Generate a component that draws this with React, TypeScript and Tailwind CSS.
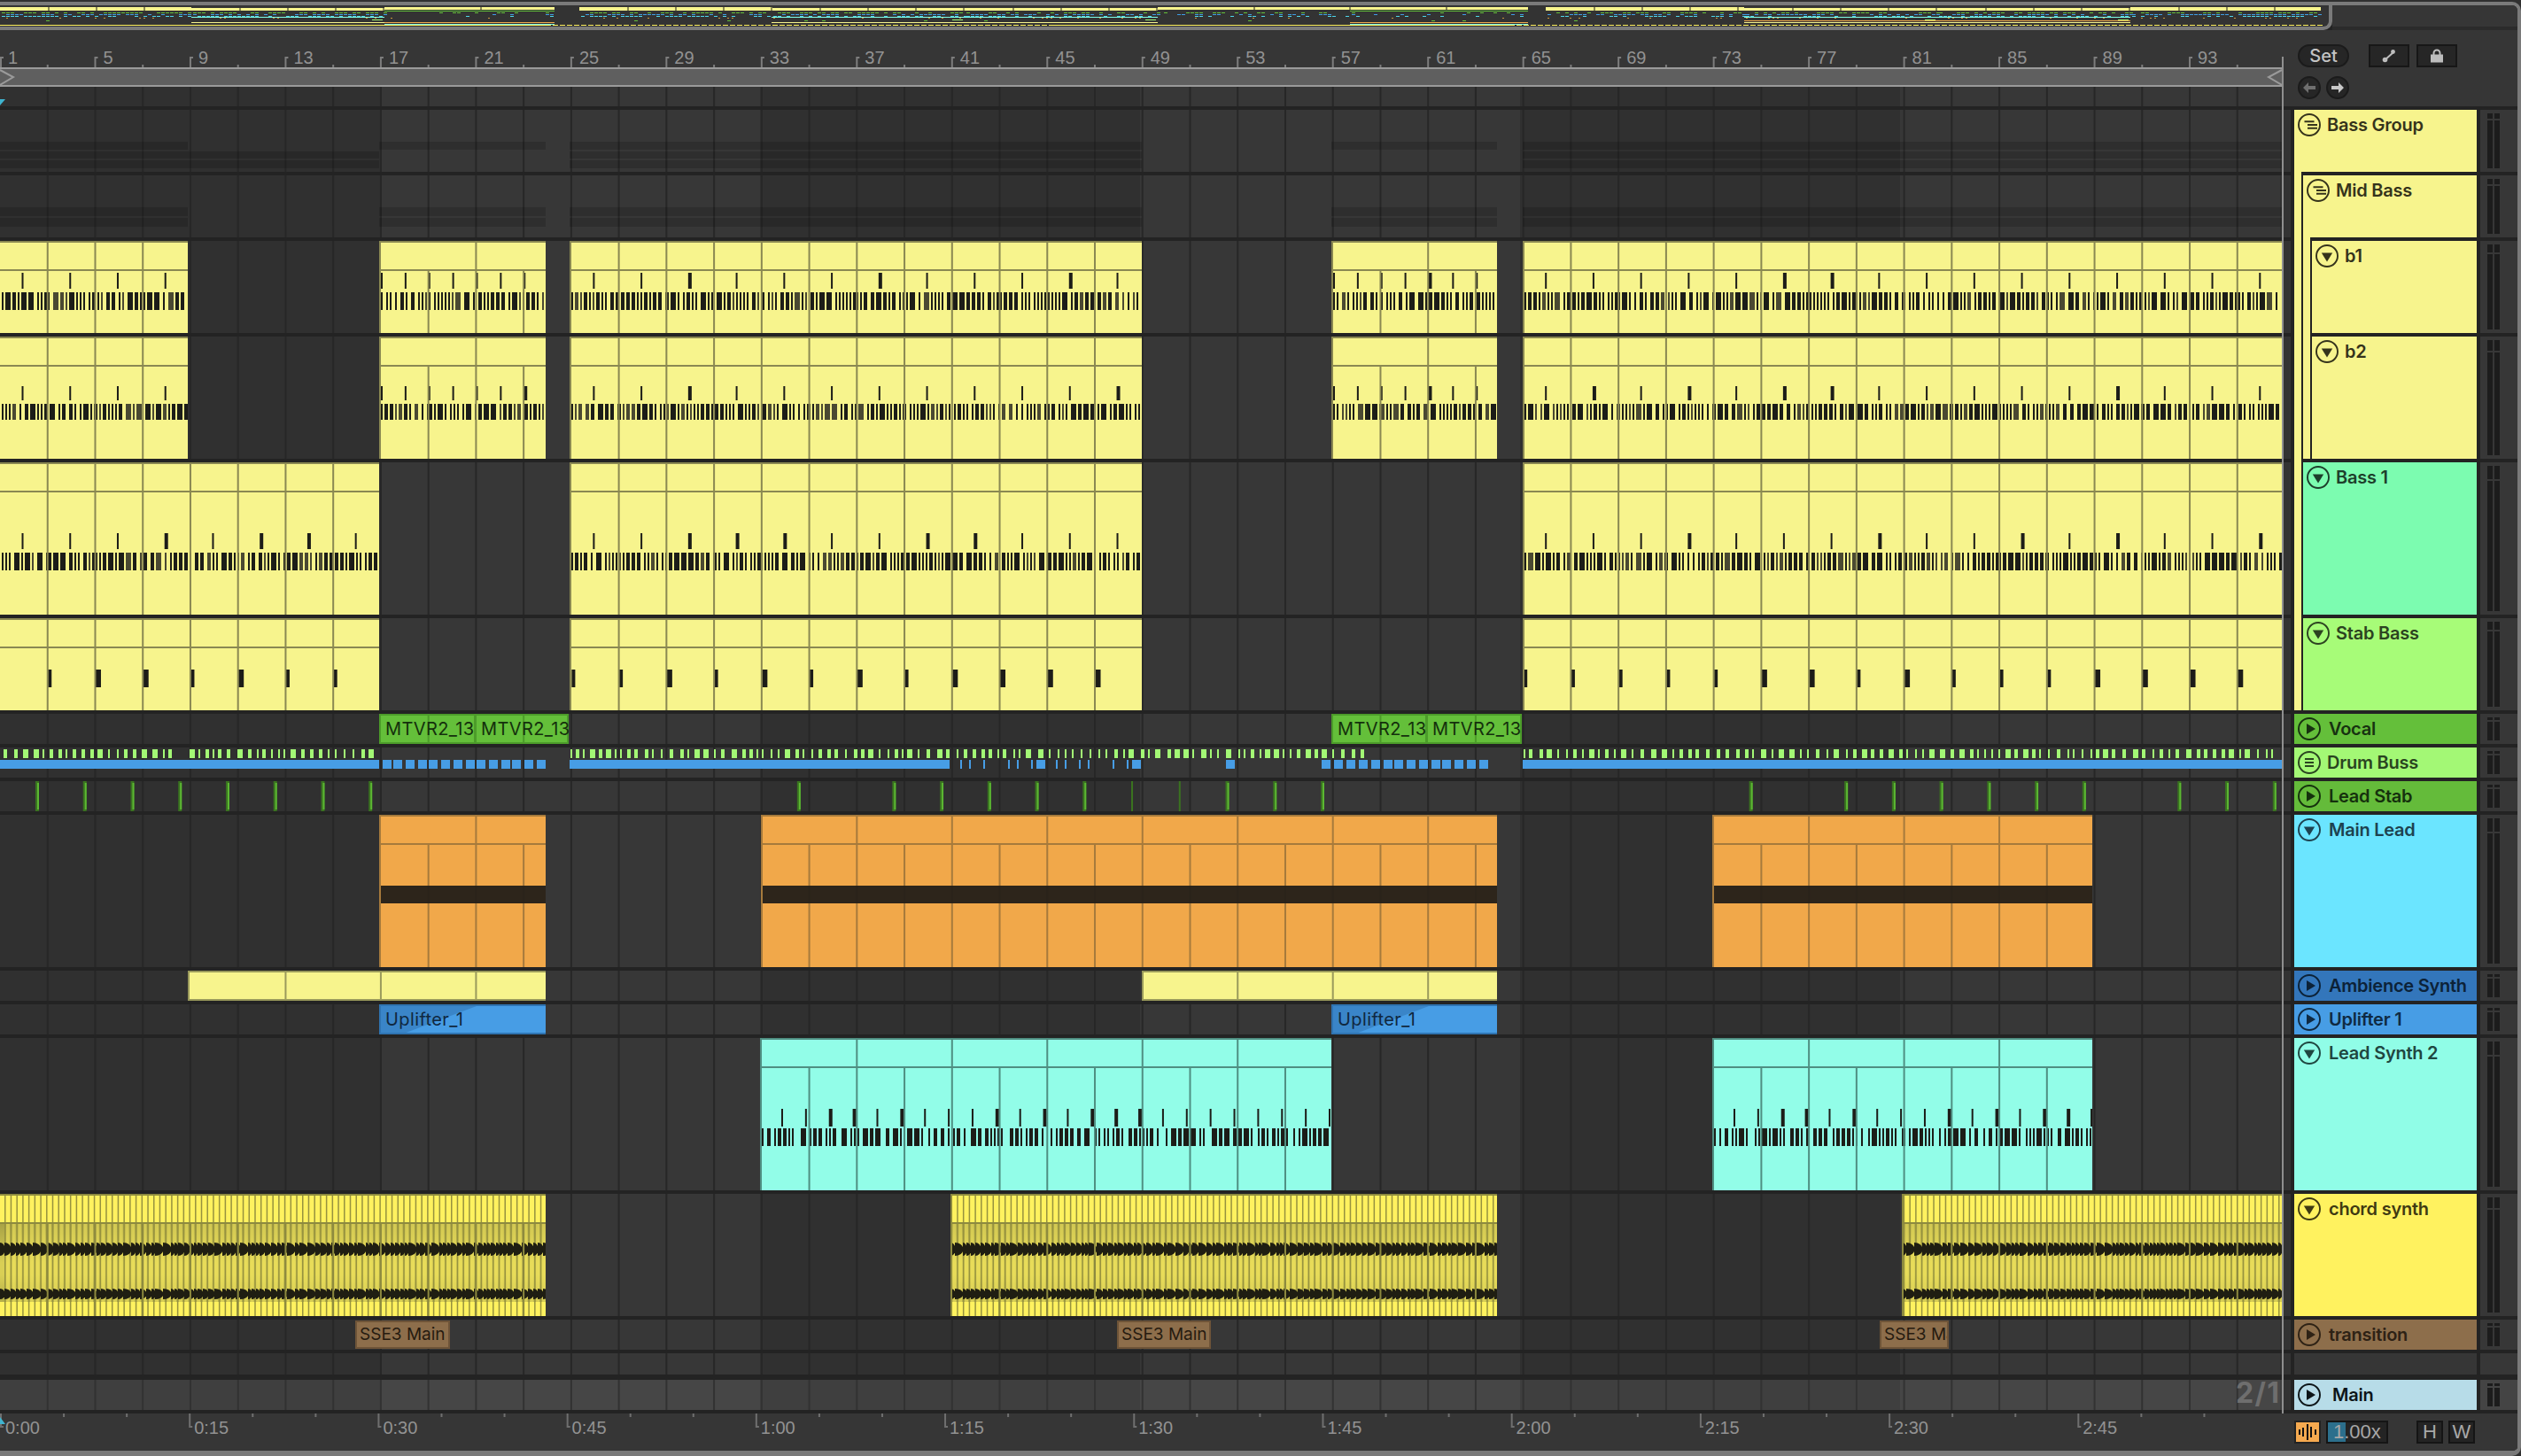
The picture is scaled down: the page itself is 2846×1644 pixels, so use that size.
import type { ReactNode } from "react";

const BAR = 26.87;
const STEP = 53.74;
const barX = (n: number) => (n - 1) * BAR - 1;
const gridX = (k: number) => k * STEP - 1;

const LABEL_FONT = "font-['Inter',sans-serif]";
const RULER_FONT = "font-['Liberation_Sans',sans-serif]";

function makeRng(seed: number) {
  let s = seed;
  return () => {
    s = (s * 1664525 + 1013904223) % 4294967296;
    return s / 4294967296;
  };
}

const box = (x: number, y: number, w: number, h: number) => `M${x} ${y}h${w}v${h}h${-w}z`;

function pick(r: () => number, list: number[]) {
  return list[Math.floor(r() * list.length)];
}

type Span = [number, number];

const B_SPANS: Span[] = [[0, 212], [428, 616], [643, 1289], [1503, 1690], [1719, 2576]];
const BASS_SPANS: Span[] = [[0, 428], [643, 1289], [1719, 2576]];

function LaneBg({ h, main = false }: { h: number; main?: boolean }) {
  const sections = [1, 3, 5];
  let grid = "";
  for (let k = 1; k < 48; k++) grid += box(gridX(k), 0, 2, h);
  return (
    <svg className="absolute inset-0" width={2576} height={h}>
      {sections.map((i) => (
        <rect key={i} x={i * 429} y={0} width={429} height={h} fill={main ? "#464646" : "#373737"} />
      ))}
      <path d={grid} fill={main ? "#323232" : "#272727"} />
    </svg>
  );
}

function Stripes({ spans, y, h }: { spans: Span[]; y: number; h: number }) {
  return (
    <>
      {spans.map(([a, b]) => (
        <div key={a} className="absolute bg-[#000000]/15" style={{ left: a, width: b - a, top: y, height: h }} />
      ))}
    </>
  );
}

function Clip({
  span,
  h,
  bg,
  line,
  band = 34,
  major = 1,
  label,
  labelCls,
  children,
  overlay,
}: {
  span: Span;
  h: number;
  bg: string;
  line: string;
  band?: number;
  major?: number;
  label?: string;
  labelCls?: string;
  children?: ReactNode;
  overlay?: ReactNode;
}) {
  const [x0, x1] = span;
  const w = x1 - x0;
  let lines = "";
  for (let k = 1; k < 48; k++) {
    const x = gridX(k) - x0;
    if (x < 2 || x >= w - 1) continue;
    if (k % major === 0) lines += box(x, 0, 2, h);
    else lines += box(x, band, 2, h - band);
  }
  return (
    <div className={`absolute top-0 overflow-hidden ${bg}`} style={{ left: x0, width: w, height: h }}>
      <svg className="absolute inset-0" width={w} height={h}>
        {children}
        <path d={lines} fill={line} />
        {overlay}
        <rect x={0} y={0} width={w} height={2} fill={line} />
        <rect x={0} y={0} width={x0 > 0 ? 2 : 0} height={h} fill={line} />
        {band < h ? <rect x={0} y={band - 2} width={w} height={2} fill={line} /> : null}
        {band >= h ? <rect x={0} y={h - 2} width={w} height={2} fill={line} /> : null}
      </svg>
      {label ? (
        <span
          className={`absolute top-[5px] left-[7px] text-[20px] leading-[24px] tracking-[0.02em] whitespace-nowrap ${LABEL_FONT} ${labelCls}`}
        >
          {label}
        </span>
      ) : null}
    </div>
  );
}

function Barcode({
  x0,
  x1,
  y,
  h,
  seed,
  groups = false,
  skip = 2,
}: {
  x0: number;
  x1: number;
  y: number;
  h: number;
  seed: number;
  groups?: boolean;
  skip?: number;
}) {
  const r = makeRng(seed);
  let dark = "";
  let olive = "";
  let x = skip;
  let n = 0;
  const w = x1 - x0;
  while (x < w - 2) {
    const bw = pick(r, [2, 2, 2, 4, 4, 6]);
    if (!groups && r() < 0.18) olive += box(x, y, bw, h);
    else dark += box(x, y, Math.min(bw, w - x), h);
    x += bw + pick(r, [2, 2, 2, 4]);
    n++;
    if (groups && n % 7 === 0) x += 4;
  }
  return (
    <>
      <path d={olive} fill="#4a4932" />
      <path d={dark} fill="#1c1d18" />
    </>
  );
}

function Ticks({ xs, x0, y, h, seed, wide = false }: { xs: number[]; x0: number; y: number; h: number; seed: number; wide?: boolean }) {
  const r = makeRng(seed);
  let d = "";
  xs.forEach((x) => {
    const w = wide ? pick(r, [4, 6, 6]) : pick(r, [2, 2, 4]);
    d += box(x - x0, y, w, h);
  });
  return <path d={d} fill="#1c1c18" />;
}

function stepList(a: number, b: number, start: number, step: number) {
  const out: number[] = [];
  for (let x = start; x < b - 1; x += step) if (x >= a) out.push(x);
  return out;
}

function YellowClips({ spans, h, tickY, barY, barH, seed, majors }: { spans: Span[]; h: number; tickY: number; barY: number; barH: number; seed: number; majors?: number[] }) {
  return (
    <>
      {spans.map(([a, b], i) => (
        <Clip key={a} span={[a, b]} h={h} bg="bg-[#f7f48d]" line="#8a8852" major={majors ? majors[i] : 1}>
          <Ticks
            xs={stepList(a, b, a === 428 || a === 1503 ? a + 2 : 24.5, a === 428 || a === 1503 ? BAR : STEP)}
            x0={a}
            y={tickY}
            h={barH - 2}
            seed={seed + i}
          />
          <Barcode x0={a} x1={b} y={barY} h={barH} seed={seed * 3 + i * 11} />
        </Clip>
      ))}
    </>
  );
}

function DrumLane() {
  const r = makeRng(17);
  let green = "";
  const spans: Span[] = [[4, 198], [214, 420], [644, 1540], [1720, 2566]];
  spans.forEach(([a, b]) => {
    let x = a;
    while (x < b) {
      const w = pick(r, [2, 4, 4, 6, 2]);
      green += box(x, 2, w, 10);
      x += w + pick(r, [4, 6, 6, 8]);
    }
  });
  let blue = box(0, 14, 428, 10) + box(643, 14, 429, 10) + box(1719, 14, 857, 10);
  [432, 444, 458, 472, 484, 498, 512, 526, 538, 552, 566, 578, 592, 606].forEach((x) => (blue += box(x, 14, 10, 10)));
  [1084, 1094, 1110, 1138, 1148, 1164, 1192, 1202, 1218, 1228, 1256, 1272].forEach((x) => (blue += box(x, 14, 2, 10)));
  [1170, 1278, 1384, 1492, 1506, 1520, 1534, 1548, 1562, 1574, 1588, 1602, 1616, 1628, 1642, 1656, 1670].forEach(
    (x) => (blue += box(x, 14, 10, 10)),
  );
  return (
    <svg className="absolute inset-0" width={2576} height={34}>
      <path d={green} fill="#a3f875" />
      <path d={blue} fill="#479de5" />
    </svg>
  );
}

function StabLane() {
  const strong = [0, 1, 2, 3, 4, 5, 6, 7, 16, 18, 19, 20, 21, 22, 25, 26, 27, 36, 38, 39, 40, 41, 42, 43, 45, 46, 47];
  const thin = [23, 24];
  return (
    <svg className="absolute inset-0" width={2576} height={34}>
      {strong.map((k) => (
        <g key={k}>
          <rect x={40 + k * 53.74} y={0} width={4} height={34} fill="#3a7320" />
          <rect x={42 + k * 53.74} y={2} width={2} height={30} fill="#5cb833" />
        </g>
      ))}
      {thin.map((k) => (
        <rect key={k} x={41 + k * 53.74} y={0} width={2} height={34} fill="#3a7320" />
      ))}
    </svg>
  );
}

function ChordClip({ span, seed }: { span: Span; seed: number }) {
  const [a, b] = span;
  const w = b - a;
  const r = makeRng(seed);
  let lines = "";
  let blobs = "";
  let glow = "";
  for (let x = 6 - ((a + 1) % 6.72); x < w; x += 6.72) {
    lines += box(x, 2, 1.5, 136);
    glow += box(x + 2, 34, 4, 88);
  }
  let x = 0;
  while (x < w - 1) {
    const bw = pick(r, [5, 6, 7, 8, 10]);
    const d = (y0: number, y1: number) =>
      `M${x} ${y0}Q${x + bw * 0.8} ${y0},${x + bw} ${(y0 + y1) / 2}Q${x + bw * 0.8} ${y1},${x} ${y1}z`;
    blobs += d(55, 70) + d(107, 119);
    x += bw - 1;
  }
  return (
    <Clip span={span} h={138} bg="bg-[#fff25f]" line="#8d8a3f" major={999}>
      <defs>
        <linearGradient id={`wave${seed}`} x1="0" y1="0" x2="0" y2="1">
          <stop offset="0" stopColor="#a9a346" />
          <stop offset="0.5" stopColor="#d9cf55" />
          <stop offset="0.65" stopColor="#d9cf55" />
          <stop offset="1" stopColor="#b3ad49" />
        </linearGradient>
      </defs>
      <rect x={0} y={34} width={w} height={88} fill={`url(#wave${seed})`} />
      <path d={glow} fill="#f4e85c" fillOpacity={0.55} />
      <path d={lines} fill="#96923f" />
      <path d={blobs} fill="#1f1e12" />
    </Clip>
  );
}

function TrackIcon({ kind }: { kind: "group" | "bus" | "play" | "down" }) {
  return (
    <svg width={26} height={26} viewBox="0 0 26 26" className="shrink-0">
      <circle cx={13} cy={13} r={12} fill="none" stroke="currentColor" strokeWidth={1.9} />
      {kind === "play" ? <path d="M10 7l0 12 10-6z" fill="currentColor" /> : null}
      {kind === "down" ? <path d="M6.8 9.6h12.4L13 19.6z" fill="currentColor" /> : null}
      {kind === "group" ? <path d="M7.5 9.3h11M11 13h11M11 16.7h11" stroke="currentColor" strokeWidth={1.9} /> : null}
      {kind === "bus" ? <path d="M8 9h10M8 13h10M8 17h10" stroke="currentColor" strokeWidth={2.2} /> : null}
    </svg>
  );
}

function Meter({ h, main = false }: { h: number; main?: boolean }) {
  const piece = Math.max(2, Math.round(h * 0.09));
  const bar = (
    <div className="flex w-[6px] flex-col gap-[2px]">
      <div className="bg-[#1c1c1c]" style={{ height: piece }} />
      <div className="flex-1 bg-[#1c1c1c]" />
    </div>
  );
  return (
    <div className={`ml-1 flex h-full w-[42px] gap-[2px] py-1 pl-2 ${main ? "bg-[#444444]" : "bg-[#373737]"}`}>
      {bar}
      {bar}
    </div>
  );
}

function Track({
  h,
  name,
  kind,
  bg,
  fg,
  indent = 0,
  gap = "ml-[9px]",
  main = false,
  children,
}: {
  h: number;
  name?: string;
  kind?: "group" | "bus" | "play" | "down";
  bg?: string;
  fg?: string;
  indent?: number;
  gap?: string;
  main?: boolean;
  children?: ReactNode;
}) {
  return (
    <div className="flex" style={{ height: h }}>
      <div className={`relative w-[2576px] overflow-hidden ${main ? "bg-[#3f3f3f]" : "bg-[#303030]"}`}>
        <LaneBg h={h} main={main} />
        {children}
      </div>
      <div className="w-[2px]" />
      <div className="h-full w-[8px] bg-[#333333]" />
      <div className="w-[4px]" />
      <div className="flex w-[206px]" style={{ paddingLeft: indent }}>
        {name ? (
          <div className={`flex h-full flex-1 items-start pl-[4px] ${bg} ${fg}`}>
            <div className="flex h-[34px] items-center">
              <TrackIcon kind={kind ?? "play"} />
              <span className={`${gap} text-[20px] leading-[24px] font-semibold tracking-[-0.012em] whitespace-nowrap ${LABEL_FONT}`}>
                {name}
              </span>
            </div>
          </div>
        ) : (
          <div className="h-full flex-1 bg-[#363636]" />
        )}
      </div>
      {name ? <Meter h={h} main={main} /> : <div className="ml-1 h-full w-[42px] bg-[#373737]" />}
    </div>
  );
}

function Overview() {
  const r = makeRng(5);
  const paths: Record<string, string> = {
    "#f7f48d": "",
    "#8a8852": "",
    "#64bf3a": "",
    "#3f9de5": "",
    "#4fd6e8": "",
    "#c9963c": "",
    "#7ffde4": "",
    "#f1a84a": "",
    "#fff25f": "",
    "#a3f875": "",
  };
  const add = (c: string, x: number, y: number, w: number, h: number) => {
    paths[c] += box(x, y - 6, w, h);
  };
  const dots = (a: number, b: number, density: number) => {
    for (let x = a + 2; x < b; x += 5) {
      if (r() < density) add("#64bf3a", x, 14, 4, 1);
      if (r() < density) add("#3f9de5", x, 16, 4, 1);
      if (r() < density) add("#4fd6e8", x, 18, 4, 1);
      if (r() < density * 0.35) add("#c9963c", x, 20, 2, 1);
      if (r() < 0.05) add("#64bf3a", x, 23, 4, 1);
    }
  };
  const top = (a: number, b: number, y: number, h: number, step: number) => {
    add("#f7f48d", a, y, b - a, h);
    for (let x = a + step; x < b; x += step) add("#8a8852", x, y, 2, h);
  };
  const full = (a: number, b: number) => {
    top(a, b, 8, 4, 54);
    dots(a, b, 0.5);
  };
  const busy = (a: number, b: number) => {
    top(a, b, 9, 3, 54);
    dots(a, b, 0.55);
    add("#7ffde4", a, 19, b - a, 1);
    add("#f7f48d", a, 25, b - a, 1);
    add("#a3f875", b - 14, 22, 12, 1);
  };
  const sparse = (a: number, b: number) => {
    top(a, b, 8, 3, 108);
    add("#64bf3a", a, 12, b - a, 1);
    dots(a, b, 0.14);
    add("#f1a84a", a, 25, b - a, 1);
    add("#7ffde4", a, 27, b - a, 1);
  };
  full(0, 216);
  busy(216, 434);
  sparse(434, 626);
  full(654, 871);
  busy(871, 1089);
  busy(1089, 1307);
  dots(1307, 1524, 0.4);
  top(1307, 1524, 8, 3, 108);
  sparse(1524, 1725);
  full(1745, 1969);
  busy(1969, 2187);
  busy(2187, 2405);
  add("#f1a84a", 1969, 23, 436, 1);
  full(2405, 2620);
  for (let x = 0; x < 2620; x += 8) add("#fff25f", x, 28, 6, 1);
  add("#fff25f", 0, 28, 620, 1);
  add("#fff25f", 1185, 28, 520, 1);
  return (
    <div className="flex h-[28px]">
      <div className="h-full w-[2633px] overflow-hidden rounded-br-[10px] border-r-4 border-b-4 border-[#7a7a7a] bg-[#333333]">
        <svg width={2629} height={24}>
          {Object.keys(paths).map((c) => (
            <path key={c} d={paths[c]} fill={c} />
          ))}
        </svg>
      </div>
      <div className="h-full flex-1 border-b-4 border-[#2b2b2b] bg-[#363636]" />
    </div>
  );
}

function BarRuler() {
  const labels: number[] = [];
  for (let n = 1; n <= 93; n += 4) labels.push(n);
  let d = "";
  labels.forEach((n) => {
    const x = Math.max(barX(n), 0);
    d += box(x, 30, 2, 12) + box(x, 30, 4, 2);
    d += box(barX(n + 2), 39, 2, 3);
  });
  return (
    <div className="relative h-[42px]">
      <svg className="absolute inset-0" width={2576} height={42}>
        <path d={d} fill="#7d7d7d" />
      </svg>
      {labels.map((n) => (
        <span
          key={n}
          className={`absolute top-[20px] text-[20px] leading-[22px] text-[#929292] ${RULER_FONT}`}
          style={{ left: barX(n) + 10 }}
        >
          {n}
        </span>
      ))}
    </div>
  );
}

function LoopBar() {
  return (
    <div className="relative h-[22px] border-y-2 border-[#9a9a9a] bg-[#5f5f5f]">
      <svg className="absolute top-[-2px] left-0" width={2576} height={22} fill="none" stroke="#9a9a9a" strokeWidth={2}>
        <path d="M0 3L15 11 0 20" />
        <path d="M2576 3L2561 11 2576 20" />
      </svg>
    </div>
  );
}

function SidePanel() {
  const btn = "flex h-[26px] w-[46px] items-center justify-center border-2 border-[#171717] bg-[#262626]";
  return (
    <div className="flex w-[266px] flex-col gap-[10px] bg-[#363636] pt-4 pl-[18px]">
      <div className="flex h-[26px] items-center">
        <div
          className={`flex h-[26px] w-[58px] items-center justify-center rounded-full border-2 border-[#1b1b1b] bg-[#262626] text-[20px] leading-none font-medium text-[#c4c4c4] ${LABEL_FONT}`}
        >
          Set
        </div>
        <div className={`ml-[22px] ${btn}`}>
          <svg width={16} height={16} viewBox="0 0 16 16">
            <path d="M3 13L13 4" stroke="#bdbdbd" strokeWidth={2} />
            <circle cx={3.5} cy={12.5} r={2.8} fill="#bdbdbd" />
            <circle cx={12.5} cy={3.5} r={2.4} fill="#bdbdbd" />
          </svg>
        </div>
        <div className={`ml-2 ${btn}`}>
          <svg width={16} height={16} viewBox="0 0 16 16">
            <path d="M4.5 7V5a3.5 3.5 0 0 1 7 0v2" fill="none" stroke="#bdbdbd" strokeWidth={2} />
            <rect x={1} y={6.5} width={14} height={9} fill="#bdbdbd" />
          </svg>
        </div>
      </div>
      <div className="flex gap-[6px]">
        <div className="flex h-[26px] w-[26px] items-center justify-center rounded-full border-2 border-[#1b1b1b] bg-[#262626]">
          <svg width={16} height={14} viewBox="0 0 16 14">
            <path d="M7 1L1 7l6 6V9h8V5H7z" fill="#6f6f6f" />
          </svg>
        </div>
        <div className="flex h-[26px] w-[26px] items-center justify-center rounded-full border-2 border-[#1b1b1b] bg-[#262626]">
          <svg width={16} height={14} viewBox="0 0 16 14">
            <path d="M9 1l6 6-6 6V9H1V5h8z" fill="#c8c8c8" />
          </svg>
        </div>
      </div>
    </div>
  );
}

function TimeRuler() {
  const times = ["0:00", "0:15", "0:30", "0:45", "1:00", "1:15", "1:30", "1:45", "2:00", "2:15", "2:30", "2:45"];
  let d = "";
  for (let k = 0; k < 36; k++) {
    const x = k * 71.07;
    if (k % 3 === 0) d += box(x, 0, 2, 16) + box(x, 14, 4, 2);
    else d += box(x, 0, 2, 4);
  }
  const hBtn = `flex h-[26px] w-[30px] items-center justify-center border-2 border-[#151515] bg-[#242424] text-[22px] leading-none text-[#a8a8a8] ${RULER_FONT}`;
  return (
    <div className="flex h-[42px] bg-[#363636]">
      <div className="relative w-[2590px]">
        <svg className="absolute inset-0" width={2578} height={42}>
          <path d={d} fill="#6f6f6f" />
          <path d="M0 4l6 8H0z" fill="#3fb4d0" />
        </svg>
        {times.map((t, k) => (
          <span
            key={t}
            className={`absolute top-[5px] text-[20px] leading-[22px] text-[#929292] ${RULER_FONT}`}
            style={{ left: k * 213.2 + 6 }}
          >
            {t}
          </span>
        ))}
      </div>
      <div className="flex items-start pt-2">
        <div className="flex h-[26px] w-[30px] items-center justify-center border-2 border-[#222222] bg-[#f5a94f]">
          <svg width={22} height={18} viewBox="0 0 22 18" fill="#111111">
            <rect x={1} y={6} width={2} height={6} />
            <rect x={5} y={4} width={2} height={10} />
            <rect x={10} y={0} width={2} height={18} />
            <rect x={14} y={3} width={2} height={12} />
            <rect x={19} y={6} width={2} height={6} />
          </svg>
        </div>
        <div className="relative ml-[6px] flex h-[26px] w-[70px] items-center border-2 border-[#151515] bg-[#242424]">
          <div className="h-full w-[20px] bg-[#2c6f8c]" />
          <span className={`absolute left-[6px] text-[22px] leading-none text-[#a8a8a8] ${RULER_FONT}`}>1.00x</span>
        </div>
        <div className={`ml-8 ${hBtn}`}>H</div>
        <div className={`ml-[6px] ${hBtn}`}>W</div>
      </div>
    </div>
  );
}

export default function App() {
  const teal: Span[] = [[858, 1503], [1933, 2362]];
  const orange: Span[] = [[428, 616], [859, 1690], [1933, 2362]];
  return (
    <div className="h-[1644px] w-[2846px] overflow-hidden bg-[#303030] pt-[2px]">
      <div className="flex h-[1642px] flex-col overflow-hidden rounded-tr-[10px] rounded-br-[10px] border-t-4 border-r-4 border-b-[6px] border-[#7a7a7a] bg-[#232323]">
        <Overview />
        <div className="flex h-[86px]">
          <div className="relative w-[2576px] bg-[#363636]">
            <BarRuler />
            <LoopBar />
            <div className="relative h-[22px] overflow-hidden bg-[#303030]">
              <LaneBg h={22} />
              <svg className="absolute top-[14px] left-0" width={8} height={8}>
                <path d="M0 0h6L0 7z" fill="#3fb4d0" />
              </svg>
            </div>
          </div>
          <SidePanel />
        </div>
        <div className="relative mt-1 flex flex-col gap-1">
          <div className="absolute top-[-60px] bottom-[-4px] left-[2576px] z-10 w-[2px] bg-[#8f8f8f]" />
          <div className="absolute top-[70px] left-[2590px] z-10 h-[608px] w-[8px] bg-[#f7f48d]" />
          <div className="absolute top-[144px] left-[2600px] z-10 h-[250px] w-[8px] bg-[#f7f48d]" />

          <Track h={70} name="Bass Group" kind="group" bg="bg-[#f7f48d]" fg="text-[#35331b]" gap="ml-[7px]">
            <Stripes spans={B_SPANS} y={36} h={9} />
            <Stripes spans={BASS_SPANS} y={47} h={8} />
            <Stripes spans={BASS_SPANS} y={57} h={9} />
          </Track>
          <Track h={70} name="Mid Bass" kind="group" bg="bg-[#f7f48d]" fg="text-[#35331b]" indent={10} gap="ml-[7px]">
            <Stripes spans={B_SPANS} y={36} h={10} />
            <Stripes spans={B_SPANS} y={48} h={10} />
          </Track>
          <Track h={104} name="b1" kind="down" bg="bg-[#f7f48d]" fg="text-[#35331b]" indent={20} gap="ml-[7px]">
            <YellowClips spans={B_SPANS} h={104} tickY={36} barY={58} barH={20} seed={11} majors={[1, 2, 1, 2, 1]} />
          </Track>
          <Track h={138} name="b2" kind="down" bg="bg-[#f7f48d]" fg="text-[#35331b]" indent={20} gap="ml-[7px]">
            <YellowClips spans={B_SPANS} h={138} tickY={56} barY={76} barH={18} seed={23} majors={[1, 2, 1, 2, 1]} />
          </Track>
          <Track h={172} name="Bass 1" kind="down" bg="bg-[#7cfcb0]" fg="text-[#1d3f2b]" indent={10} gap="ml-[7px]">
            <YellowClips spans={BASS_SPANS} h={172} tickY={80} barY={102} barH={20} seed={31} />
          </Track>
          <Track h={104} name="Stab Bass" kind="down" bg="bg-[#a7fc78]" fg="text-[#2c4320]" indent={10} gap="ml-[7px]">
            {BASS_SPANS.map(([a, b], i) => (
              <Clip key={a} span={[a, b]} h={104} bg="bg-[#f7f48d]" line="#8a8852">
                <Ticks xs={stepList(a, b, 0.5, STEP).filter((x) => x > a + 1)} x0={a} y={58} h={20} seed={41 + i} wide />
              </Clip>
            ))}
          </Track>
          <Track h={34} name="Vocal" kind="play" bg="bg-[#64bf3a]" fg="text-[#173210]">
            {([[428, 537], [536, 642], [1503, 1611], [1610, 1718]] as Span[]).map((s) => (
              <Clip key={s[0]} span={s} h={34} bg="bg-[#64bf3a]" line="#4c9c2a" label="MTVR2_13" labelCls="text-[#14300c]">
                <rect x={s[1] - s[0] - 2} y={0} width={2} height={34} fill="#4c9c2a" />
              </Clip>
            ))}
          </Track>
          <Track h={34} name="Drum Buss" kind="bus" bg="bg-[#a3f875]" fg="text-[#2a4420]" gap="ml-[7px]">
            <DrumLane />
          </Track>
          <Track h={34} name="Lead Stab" kind="play" bg="bg-[#64bb3a]" fg="text-[#15310d]">
            <StabLane />
          </Track>
          <Track h={172} name="Main Lead" kind="down" bg="bg-[#6be5ff]" fg="text-[#1d4250]">
            {orange.map((s) => (
              <Clip
                key={s[0]}
                span={s}
                h={172}
                bg="bg-[#f1a84a]"
                line="#a67a3c"
                major={2}
                overlay={<rect x={0} y={80} width={s[1] - s[0]} height={20} fill="#241f19" fillOpacity={0.96} />}
              />
            ))}
          </Track>
          <Track h={34} name="Ambience Synth" kind="play" bg="bg-[#3376bb]" fg="text-[#0c2238]">
            {([[212, 616], [1289, 1690]] as Span[]).map((s) => (
              <Clip key={s[0]} span={s} h={34} bg="bg-[#f7f48d]" line="#9a9a5c" major={2} />
            ))}
          </Track>
          <Track h={34} name="Uplifter 1" kind="play" bg="bg-[#479de5]" fg="text-[#0f2a42]">
            {([[428, 616], [1503, 1690]] as Span[]).map((s) => (
              <Clip key={s[0]} span={s} h={34} bg="bg-[#479de5]" line="#2f74b2" major={999} label="Uplifter_1" labelCls="text-[#10283f]">
                <path d="M0 0L110 2 25 34H0z" fill="#3a85c8" />
              </Clip>
            ))}
          </Track>
          <Track h={172} name="Lead Synth 2" kind="down" bg="bg-[#90fde7]" fg="text-[#1f4640]">
            {teal.map((s, i) => (
              <Clip key={s[0]} span={s} h={172} bg="bg-[#92fde8]" line="#4f8f82" major={2}>
                <Ticks xs={stepList(s[0], s[1], s[0] + 24, BAR)} x0={s[0]} y={80} h={20} seed={3} />
                <Barcode x0={s[0]} x1={s[1]} y={102} h={20} seed={61 + i} groups />
              </Clip>
            ))}
          </Track>
          <Track h={138} name="chord synth" kind="down" bg="bg-[#fff25f]" fg="text-[#3f3a12]">
            <ChordClip span={[0, 616]} seed={71} />
            <ChordClip span={[1073, 1690]} seed={72} />
            <ChordClip span={[2147, 2576]} seed={73} />
          </Track>
          <Track h={34} name="transition" kind="play" bg="bg-[#8d6e4b]" fg="text-[#2e2215]">
            {([[401, 508], [1261, 1367], [2122, 2200]] as Span[]).map((s, i) => (
              <div
                key={i}
                className={`absolute top-[1px] h-[32px] overflow-hidden border-2 border-[#6e5438] bg-[#8d6e4b] pl-[3px] text-[19px] leading-[28px] whitespace-nowrap text-[#261b10] ${LABEL_FONT}`}
                style={{ left: s[0], width: s[1] - s[0] }}
              >
                SSE3 Main
              </div>
            ))}
          </Track>
          <Track h={24} />
          <div className="relative mt-[2px]">
            <Track h={34} name="Main" kind="play" bg="bg-[#b7dce8]" fg="text-[#0d1518]" gap="ml-[13px]" main />
            <span
              className={`absolute top-[-3px] left-[2524px] z-20 text-[32px] leading-[36px] font-bold tracking-[0.04em] text-[#6e6e6e] ${LABEL_FONT}`}
            >
              2/1
            </span>
          </div>
        </div>
        <div className="mt-1">
          <TimeRuler />
        </div>
      </div>
    </div>
  );
}
